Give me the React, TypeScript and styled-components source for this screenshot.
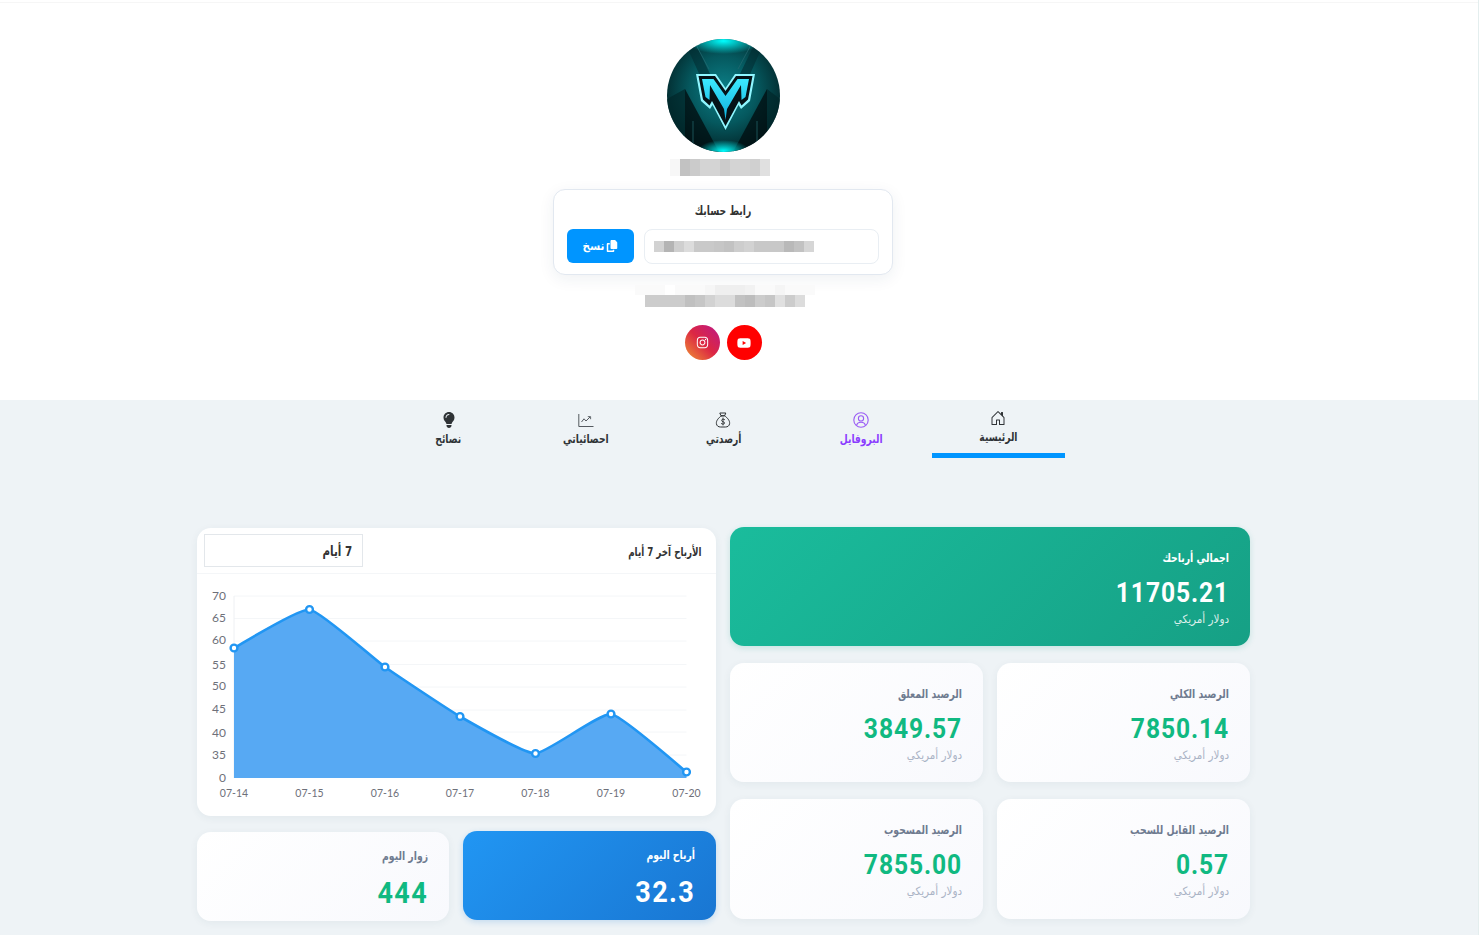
import React from "react";
import styled, { createGlobalStyle } from "styled-components";
import { BsHouseDoor } from "react-icons/bs";
import { FaCopy, FaInstagram, FaLightbulb, FaYoutube } from "react-icons/fa6";

const Global = createGlobalStyle`
  html, body { margin: 0; padding: 0; background: #fff; }
  body { font-family: "DejaVu Sans Condensed", "DejaVu Sans", sans-serif; overflow: hidden; }
  * { box-sizing: border-box; }
`;

const Page = styled.div`
  direction: rtl;
  width: 1479px;
  height: 935px;
  background: #eef3f6;
  border-right: 1px solid #e4eeee;
  overflow: hidden;
`;
const Hero = styled.header`
  height: 400px;
  background: #fff;
  padding: 39px 32px 0 0;
  display: flex;
  flex-direction: column;
  align-items: center;
  position: relative;
  &::before {
    content: "";
    position: absolute;
    top: 2px; left: 0; right: 0;
    height: 1px;
    background: #f6f6f6;
  }
`;
const Avatar = styled.svg`
  width: 113px;
  height: 113px;
  display: block;
  flex: none;
`;
const Mosaic = styled.div<{ $mt: number; $h: number; $left?: number; $right?: number }>`
  direction: ltr;
  display: flex;
  height: ${p => p.$h}px;
  margin-top: ${p => p.$mt}px;
  margin-left: ${p => p.$left || 0}px;
  margin-right: ${p => p.$right || 0}px;
  flex: none;
`;
const Cell = styled.i<{ $c: string }>`
  display: block;
  width: 10px;
  height: 100%;
  background: ${p => p.$c};
`;
const LinkCard = styled.section`
  width: 340px;
  height: 86px;
  margin-top: 13px;
  padding: 13px 13px 0;
  background: #fff;
  border: 1px solid #e2e8f0;
  border-radius: 12px;
  box-shadow: 0 4px 16px rgba(30, 60, 90, 0.07);
  flex: none;
`;
const LinkTitle = styled.div`
  text-align: center;
  font-size: 12.5px;
  line-height: 16px;
  font-weight: 700;
  color: #333;
  transform: scaleX(0.82);
`;
const LinkRow = styled.div`
  display: flex;
  gap: 10px;
  margin-top: 10px;
`;
const LinkInput = styled.div`
  width: 235px;
  height: 35px;
  border: 1px solid #e9eef3;
  border-radius: 8px;
  padding: 0 65px 0 9px;
  display: flex;
  align-items: center;
  justify-content: flex-end;
`;
const CopyButton = styled.button`
  width: 67px;
  height: 34px;
  border: 0;
  border-radius: 6px;
  background: #0095ff;
  color: #fff;
  font: 700 11.5px "DejaVu Sans Condensed", "DejaVu Sans", sans-serif;
  display: flex;
  align-items: center;
  justify-content: center;
  gap: 2px;
  padding: 0;
  svg { width: 12px; height: 12px; }
`;
const Socials = styled.div`
  display: flex;
  gap: 7px;
  margin-top: 18px;
`;
const Social = styled.a<{ $bg: string }>`
  width: 35px;
  height: 35px;
  border-radius: 50%;
  background: ${p => p.$bg};
  color: #fff;
  display: flex;
  align-items: center;
  justify-content: center;
`;
const Tabs = styled.nav`
  width: 687px;
  margin-right: 411px;
  display: flex;
  height: 58px;
`;
const Tab = styled.a<{ $active?: boolean; $color?: string }>`
  flex: 1;
  margin: 0 2px;
  display: flex;
  flex-direction: column;
  align-items: center;
  justify-content: center;
  gap: 3px;
  color: ${p => p.$color || "#2f3336"};
  padding-top: 1px;
  border-bottom: ${p => (p.$active ? "5px solid #0095ff" : "0")};
  svg { width: 16px; height: 16px; display: block; }
`;
const TabText = styled.span`
  font-size: 12px;
  font-weight: 700;
  line-height: 16px;
  transform: scaleX(0.85);
`;
const Board = styled.main`
  width: 1053px;
  margin: 69px 228px 0 0;
  display: grid;
  grid-template-columns: 520px 519px;
  gap: 14px;
`;
const Column = styled.div`
  display: flex;
  flex-direction: column;
`;
const Hero2 = styled.article`
  height: 119px;
  border-radius: 14px;
  padding: 22px 21px 0;
  background: linear-gradient(135deg, #1abc9c, #16a085);
  box-shadow: 0 2px 6px rgba(22, 160, 133, 0.18);
  color: #fff;
`;
const CardPair = styled.div`
  display: grid;
  grid-template-columns: 253px 253px;
  gap: 14px;
  margin-top: 17px;
`;
const Stat = styled.article<{ $h?: number }>`
  height: ${p => p.$h || 119}px;
  border-radius: 14px;
  padding: 22px 21px 0;
  background: linear-gradient(135deg, #fff, #f8f9fd);
  box-shadow: 0 2px 8px rgba(40, 60, 90, 0.06);
`;
const BlueStat = styled.article`
  height: 89px;
  border-radius: 14px;
  padding: 15px 21px 0;
  background: linear-gradient(135deg, #2196f3, #1976d2);
  box-shadow: 0 2px 6px rgba(25, 118, 210, 0.2);
  color: #fff;
`;
const Label = styled.div<{ $light?: boolean }>`
  font-size: 12px;
  font-weight: 700;
  line-height: 18px;
  color: ${p => (p.$light ? "#fff" : "#6f7b90")};
  transform: scaleX(0.86);
  transform-origin: right center;
`;
const Value = styled.div<{ $light?: boolean; $big?: boolean; $mt: number }>`
  direction: ltr;
  text-align: right;
  font-family: Roboto, sans-serif;
  font-size: ${p => (p.$big ? 30 : 28)}px;
  letter-spacing: ${p => (p.$big ? 1.5 : 1)}px;
  font-weight: 700;
  line-height: 32px;
  margin-top: ${p => p.$mt}px;
  color: ${p => (p.$light ? "#fff" : "#10b981")};
  transform: scaleX(${p => (p.$big ? 0.9 : 0.88)});
  transform-origin: right center;
`;
const Sub = styled.div<{ $light?: boolean }>`
  font-size: 11.5px;
  line-height: 14px;
  margin-top: 3px;
  color: ${p => (p.$light ? "rgba(255,255,255,.85)" : "#aab3c5")};
`;
const ChartCard = styled.section`
  height: 288px;
  margin-top: 1px;
  background: #fff;
  border-radius: 14px;
  box-shadow: 0 2px 8px rgba(40, 60, 90, 0.06);
  overflow: hidden;
`;
const ChartHead = styled.div`
  height: 46px;
  display: flex;
  align-items: center;
  justify-content: space-between;
  padding: 0 14px 0 7px;
  border-bottom: 1px solid #f4f6f8;
`;
const ChartTitle = styled.div`
  font-size: 12px;
  font-weight: 700;
  color: #333;
  margin-top: 3px;
  transform: scaleX(0.81);
  transform-origin: right center;
`;
const Range = styled.div`
  width: 159px;
  height: 33px;
  border: 1px solid #e3e7eb;
  padding: 0 10px;
  display: flex;
  align-items: center;
  color: #333;
`;
const RangeText = styled.span`
  font-size: 14px;
  font-weight: 700;
  transform: scaleX(0.82);
  transform-origin: right center;
`;
const ChartSvg = styled.svg`
  display: block;
  width: 519px;
  height: 242px;
  direction: ltr;
`;
const AxisText = styled.text`
  font-family: Lato, sans-serif;
  font-size: 12px;
  fill: #6e7079;
`;
const TickText = styled.text`
  font-family: Lato, sans-serif;
  font-size: 10.5px;
  fill: #6e7079;
`;
const BottomPair = styled.div`
  display: grid;
  grid-template-columns: 253px 252px;
  gap: 14px;
  margin-top: 15px;
`;
const Visitors = styled(Stat)`
  height: 89px;
  margin-top: 1px;
  padding-top: 15px;
`;

const shade = (list: string) => list.split(" ").map(v => "#" + v + v + v);
const nameCells = shade("f7 c2 cb d4 d4 cb d4 d4 d0 e0");
const urlCells = shade("d2 b4 cf dc c9 c9 c6 c2 cd d2 c8 c8 c8 b9 c2 d6");
const line1 = shade("fa fa fa ff fa fa fa f6 ef ef ef f2 fa fa f5 fa fa fa");
const line2 = shade("cc cc cc cc c0 c6 d2 dc dc c2 bd cc c6 e0 cc dc");

const OX = 197;
const OY = 574;
const pts = [
  [234, 648], [309.5, 609.5], [385, 667], [460, 716.5], [535.5, 753.5], [611, 714], [686.5, 772],
].map(([x, y]) => [x - OX, y - OY]);
const dates = ["07-14", "07-15", "07-16", "07-17", "07-18", "07-19", "07-20"];
const yLabels: [string, number][] = [
  ["70", 595.5], ["65", 618], ["60", 640], ["55", 664.5], ["50", 686], ["45", 708.5], ["40", 732.5], ["35", 755], ["0", 777.5],
];
const grid = [596, 618.5, 641, 664.5, 687, 710, 732, 755];
const smoothPath = () => {
  const k = 0.07;
  let d = `M${pts[0][0]},${pts[0][1]}`;
  for (let i = 0; i < pts.length - 1; i++) {
    const p0 = pts[Math.max(i - 1, 0)];
    const p1 = pts[i];
    const p2 = pts[i + 1];
    const p3 = pts[Math.min(i + 2, pts.length - 1)];
    d += ` C${p1[0] + (p2[0] - p0[0]) * k},${p1[1] + (p2[1] - p0[1]) * k} ${p2[0] - (p3[0] - p1[0]) * k},${p2[1] - (p3[1] - p1[1]) * k} ${p2[0]},${p2[1]}`;
  }
  return d;
};
const linePath = smoothPath();
const areaPath = `${linePath} L${pts[6][0]},${778 - OY} L${pts[0][0]},${778 - OY} Z`;

const Logo = () => (
  <Avatar viewBox="0 0 113 113">
    <defs>
      <radialGradient id="bg" cx="50%" cy="45%" r="60%">
        <stop offset="0" stopColor="#0c8088" />
        <stop offset="0.5" stopColor="#05585e" />
        <stop offset="1" stopColor="#021d20" />
      </radialGradient>
      <radialGradient id="glowT" cx="50%" cy="50%" r="50%">
        <stop offset="0" stopColor="#0ff" />
        <stop offset="1" stopColor="#0ff" stopOpacity="0" />
      </radialGradient>
      <linearGradient id="mfill" x1="0" y1="0" x2="0" y2="1">
        <stop offset="0" stopColor="#3ce8ff" />
        <stop offset="1" stopColor="#0fb0dc" />
      </linearGradient>
      <clipPath id="round"><circle cx="56.5" cy="56.5" r="56.5" /></clipPath>
    </defs>
    <g clipPath="url(#round)">
      <rect width="113" height="113" fill="url(#bg)" />
      <path d="M20 8 L30 8 L58 66 L86 8 L95 8 L58 92 Z" fill="#022d32" opacity=".6" />
      <path d="M18 50 L18 113 L52 113 Z" fill="#010f11" opacity=".8" />
      <path d="M100 50 L100 113 L66 113 Z" fill="#010f11" opacity=".8" />
      <path d="M0 60 L18 50 L18 113 L0 113 Z" fill="#02262a" opacity=".7" />
      <path d="M113 60 L100 50 L100 113 L113 113 Z" fill="#02262a" opacity=".7" />
      <path d="M28 4 L42 30 M85 4 L71 30 M26 82 L26 113 M90 82 L90 113" stroke="#256a70" strokeWidth=".7" />
      <ellipse cx="56.5" cy="2" rx="38" ry="13" fill="url(#glowT)" />
      <ellipse cx="56.5" cy="112" rx="26" ry="11" fill="url(#glowT)" />
      <path d="M29 35 L49 35 L58.5 49 L68 35 L88 35 L83 62 L74 70 L71.5 66 L58.5 91 L45.5 66 L43 70 L34 62 Z" fill="#8ff6ff" />
      <path d="M31.5 37 L48 37 L58.5 52 L69 37 L85.5 37 L81 60.5 L74.5 66.5 L72 62 L58.5 87 L45 62 L42.5 66.5 L36 60.5 Z" fill="#051318" />
      <path d="M35 40 L46.5 40 L58.5 57 L70.5 40 L82 40 L78.5 58 L74.5 61 L74 46 L60 70 L58.5 81 L57 70 L43 46 L42.5 61 L38.5 58 Z" fill="url(#mfill)" />
    </g>
  </Avatar>
);

const MoneyBag = () => (
  <svg viewBox="0 0 16 16" fill="none" stroke="currentColor" strokeWidth="1" strokeLinejoin="round" strokeLinecap="round">
    <path d="M5.2 1 L10.8 1 L9.6 3.8 L6.4 3.8 Z" />
    <path d="M6.4 3.8 L9.6 3.8 C12.2 5.6 15 8.6 14.6 11.6 C14.3 14 12.6 15 10.4 15 L5.6 15 C3.4 15 1.7 14 1.4 11.6 C1 8.6 3.8 5.6 6.4 3.8 Z" />
    <path d="M9.7 7.6 C9 6.8 6.6 6.9 6.6 8.4 C6.6 10.1 9.6 9.4 9.6 11 C9.6 12.4 7.1 12.5 6.3 11.6 M8 6 L8 13" strokeWidth=".9" />
  </svg>
);
const UserRing = () => (
  <svg viewBox="0 0 16 16" fill="none" stroke="#9a5cf5" strokeWidth="1.1">
    <circle cx="8" cy="8" r="7.2" />
    <circle cx="8" cy="6.4" r="2.6" />
    <path d="M3.6 13 C4.4 10.8 6 10.2 8 10.2 C10 10.2 11.6 10.8 12.4 13" />
  </svg>
);
const StatsIcon = () => (
  <svg viewBox="0 0 16 16" fill="none" stroke="#555a60" strokeWidth="1">
    <path d="M.8 2 V14.5 H15.5" />
    <path d="M3.5 10 L6 6.8 L8 9 L12 5" />
    <path d="M9.8 4.6 H12.6 V7.2" strokeWidth=".9" />
  </svg>
);

export default function App() {
  return (
    <>
      <Global />
      <Page>
        <Hero>
          <Logo />
          <Mosaic $mt={7} $h={17} $right={6}>{nameCells.map((c, i) => <Cell key={i} $c={c} />)}</Mosaic>
          <LinkCard>
            <LinkTitle>رابط حسابك</LinkTitle>
            <LinkRow>
              <LinkInput>
                <Mosaic $mt={0} $h={11}>{urlCells.map((c, i) => <Cell key={i} $c={c} />)}</Mosaic>
              </LinkInput>
              <CopyButton><FaCopy />نسخ</CopyButton>
            </LinkRow>
          </LinkCard>
          <Mosaic $mt={10} $h={10} $left={4}>{line1.map((c, i) => <Cell key={i} $c={c} />)}</Mosaic>
          <Mosaic $mt={0} $h={12} $left={4}>{line2.map((c, i) => <Cell key={i} $c={c} />)}</Mosaic>
          <Socials>
            <Social $bg="#ff0000"><FaYoutube size={14} /></Social>
            <Social $bg="linear-gradient(45deg, #f09433 0%, #dc2743 50%, #bc1888 100%)"><FaInstagram size={13} /></Social>
          </Socials>
        </Hero>
        <Tabs>
          <Tab $active><BsHouseDoor /><TabText>الرئيسية</TabText></Tab>
          <Tab $color="#8b3dff"><UserRing /><TabText>البروفايل</TabText></Tab>
          <Tab><MoneyBag /><TabText>أرصدتي</TabText></Tab>
          <Tab><StatsIcon /><TabText>احصائياتي</TabText></Tab>
          <Tab><FaLightbulb /><TabText>نصائح</TabText></Tab>
        </Tabs>
        <Board>
          <Column>
            <Hero2>
              <Label $light>اجمالي أرباحك</Label>
              <Value $light $mt={10}>11705.21</Value>
              <Sub $light>دولار أمريكي</Sub>
            </Hero2>
            <CardPair>
              <Stat>
                <Label>الرصيد الكلي</Label>
                <Value $mt={10}>7850.14</Value>
                <Sub>دولار أمريكي</Sub>
              </Stat>
              <Stat>
                <Label>الرصيد المعلق</Label>
                <Value $mt={10}>3849.57</Value>
                <Sub>دولار أمريكي</Sub>
              </Stat>
            </CardPair>
            <CardPair>
              <Stat $h={120}>
                <Label>الرصيد القابل للسحب</Label>
                <Value $mt={10}>0.57</Value>
                <Sub>دولار أمريكي</Sub>
              </Stat>
              <Stat $h={120}>
                <Label>الرصيد المسحوب</Label>
                <Value $mt={10}>7855.00</Value>
                <Sub>دولار أمريكي</Sub>
              </Stat>
            </CardPair>
          </Column>
          <Column>
            <ChartCard>
              <ChartHead>
                <ChartTitle>الأرباح آخر 7 أيام</ChartTitle>
                <Range><RangeText>7 أيام</RangeText></Range>
              </ChartHead>
              <ChartSvg viewBox="0 0 519 242">
                {grid.map(y => (
                  <line key={y} x1={234 - OX} x2={686.5 - OX} y1={y - OY} y2={y - OY} stroke="#f4f6f8" />
                ))}
                <line x1={234 - OX} x2={234 - OX} y1={596 - OY} y2={778 - OY} stroke="#eef0f3" />
                <path d={areaPath} fill="#57a9f3" />
                <path d={linePath} fill="none" stroke="#2196f3" strokeWidth="2.6" />
                {pts.map(([x, y]) => (
                  <circle key={x} cx={x} cy={y} r="3.4" fill="#fff" stroke="#2196f3" strokeWidth="2.4" />
                ))}
                {yLabels.map(([t, y]) => (
                  <AxisText key={t} x={226 - OX} y={y - OY + 4} textAnchor="end">{t}</AxisText>
                ))}
                {dates.map((t, i) => (
                  <TickText key={t} x={pts[i][0]} y={793 - OY + 4} textAnchor="middle">{t}</TickText>
                ))}
              </ChartSvg>
            </ChartCard>
            <BottomPair>
              <BlueStat>
                <Label $light>أرباح اليوم</Label>
                <Value $light $big $mt={12}>32.3</Value>
              </BlueStat>
              <Visitors>
                <Label>زوار اليوم</Label>
                <Value $big $mt={12}>444</Value>
              </Visitors>
            </BottomPair>
          </Column>
        </Board>
      </Page>
    </>
  );
}
